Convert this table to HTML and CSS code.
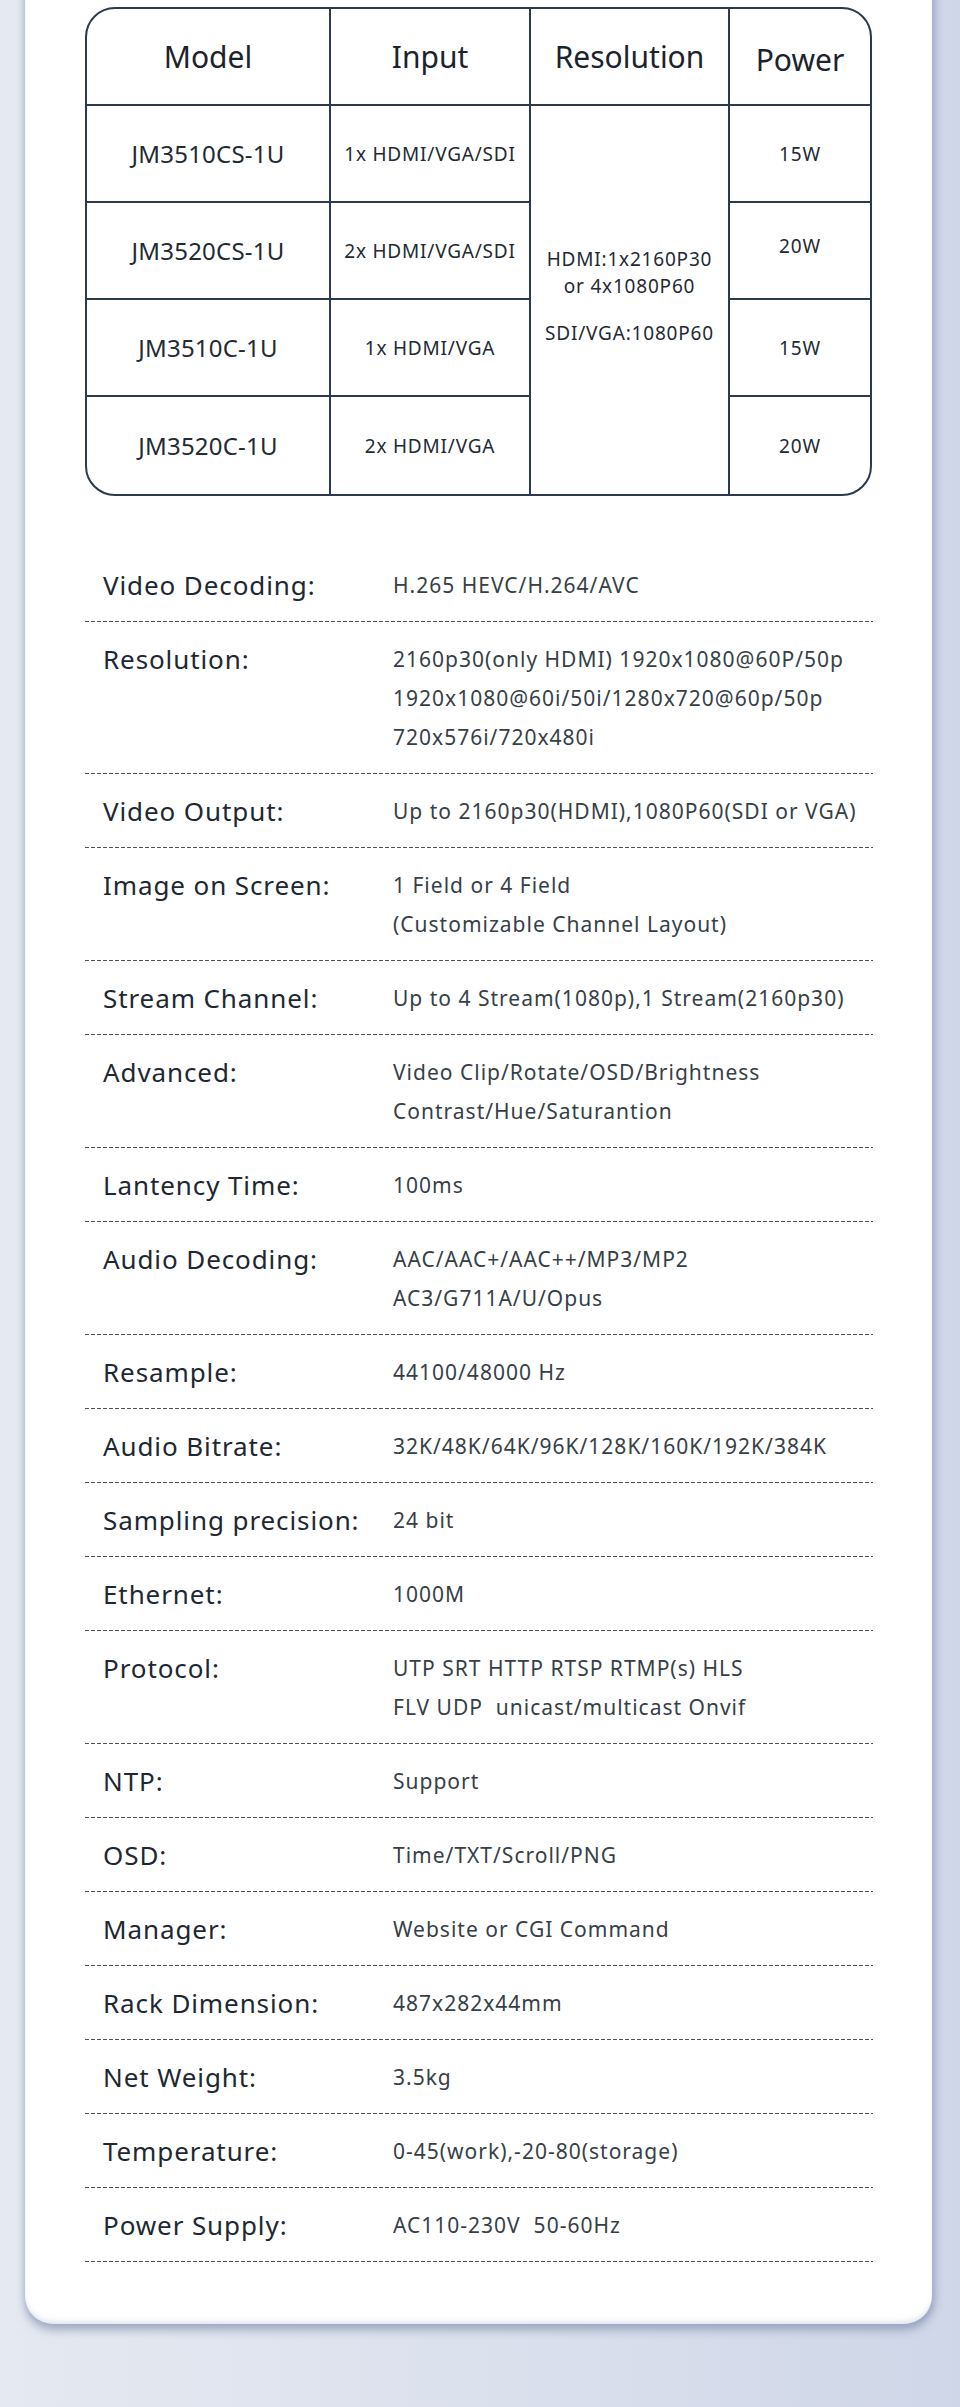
FILE: index.html
```html
<!DOCTYPE html>
<html lang="en">
<head>
<meta charset="utf-8">
<title>Specifications</title>
<link rel="stylesheet" href="styles.css">
</head>
<body>
<div class="page">
  <div class="card">
    <div class="models">
      <div class="cell head">Model</div>
      <div class="cell head">Input</div>
      <div class="cell head">Resolution</div>
      <div class="cell head last-col power-head">Power</div>

      <div class="cell res-span">
        <div class="res-block">HDMI:1x2160P30<br>or 4x1080P60</div>
        <div class="res-block">SDI/VGA:1080P60</div>
      </div>

      <div class="cell model">JM3510CS-1U</div>
      <div class="cell small">1x HDMI/VGA/SDI</div>
      <div class="cell small last-col">15W</div>

      <div class="cell model">JM3520CS-1U</div>
      <div class="cell small">2x HDMI/VGA/SDI</div>
      <div class="cell small last-col raised">20W</div>

      <div class="cell model">JM3510C-1U</div>
      <div class="cell small">1x HDMI/VGA</div>
      <div class="cell small last-col">15W</div>

      <div class="cell model last-row">JM3520C-1U</div>
      <div class="cell small last-row">2x HDMI/VGA</div>
      <div class="cell small last-col last-row">20W</div>
    </div>

    <dl class="specs">
      <div class="spec"><dt>Video Decoding:</dt><dd>H.265 HEVC/H.264/AVC</dd></div>
      <div class="spec"><dt>Resolution:</dt><dd>2160p30(only HDMI) 1920x1080@60P/50p<br>1920x1080@60i/50i/1280x720@60p/50p<br>720x576i/720x480i</dd></div>
      <div class="spec"><dt>Video Output:</dt><dd>Up to 2160p30(HDMI),1080P60(SDI or VGA)</dd></div>
      <div class="spec"><dt>Image on Screen:</dt><dd>1 Field or 4 Field<br>(Customizable Channel Layout)</dd></div>
      <div class="spec"><dt>Stream Channel:</dt><dd>Up to 4 Stream(1080p),1 Stream(2160p30)</dd></div>
      <div class="spec"><dt>Advanced:</dt><dd>Video Clip/Rotate/OSD/Brightness<br>Contrast/Hue/Saturantion</dd></div>
      <div class="spec"><dt>Lantency Time:</dt><dd>100ms</dd></div>
      <div class="spec"><dt>Audio Decoding:</dt><dd>AAC/AAC+/AAC++/MP3/MP2<br>AC3/G711A/U/Opus</dd></div>
      <div class="spec"><dt>Resample:</dt><dd>44100/48000 Hz</dd></div>
      <div class="spec"><dt>Audio Bitrate:</dt><dd>32K/48K/64K/96K/128K/160K/192K/384K</dd></div>
      <div class="spec"><dt>Sampling precision:</dt><dd>24 bit</dd></div>
      <div class="spec"><dt>Ethernet:</dt><dd>1000M</dd></div>
      <div class="spec"><dt>Protocol:</dt><dd>UTP SRT HTTP RTSP RTMP(s) HLS<br>FLV UDP&nbsp; unicast/multicast Onvif</dd></div>
      <div class="spec"><dt>NTP:</dt><dd>Support</dd></div>
      <div class="spec"><dt>OSD:</dt><dd>Time/TXT/Scroll/PNG</dd></div>
      <div class="spec"><dt>Manager:</dt><dd>Website or CGI Command</dd></div>
      <div class="spec"><dt>Rack Dimension:</dt><dd>487x282x44mm</dd></div>
      <div class="spec"><dt>Net Weight:</dt><dd>3.5kg</dd></div>
      <div class="spec"><dt>Temperature:</dt><dd>0-45(work),-20-80(storage)</dd></div>
      <div class="spec"><dt>Power Supply:</dt><dd>AC110-230V&nbsp; 50-60Hz</dd></div>
    </dl>
  </div>
</div>
</body>
</html>
```

FILE: styles.css
```css
* {
  box-sizing: border-box;
}

html, body {
  margin: 0;
  padding: 0;
}

body {
  width: 960px;
  font-family: "Noto Sans", "Open Sans", "Noto Sans CJK SC", sans-serif;
  color: #1f2a33;
  background: linear-gradient(to right, #e5e9f1 0%, #dbe1ed 50%, #cfd6e7 100%);
  overflow: hidden;
}

.page {
  min-height: 2407px;
  padding-bottom: 80px;
}

.card {
  width: 907px;
  margin: -40px 0 0 25px;
  padding: 47px 60px 62px 60px;
  background: #ffffff;
  border-radius: 0 0 28px 28px;
  box-shadow:
    inset 0 -5px 6px -3px rgba(185, 195, 215, 0.55),
    0 7px 8px rgba(125, 140, 172, 0.55),
    5px 0 6px rgba(150, 165, 198, 0.45),
    -2px 0 5px rgba(170, 182, 208, 0.35);
}

/* ---------- model table ---------- */

.models {
  display: grid;
  grid-template-columns: 244px 200px 199px 1fr;
  grid-template-rows: repeat(5, 97px);
  width: 787px;
  border: 2px solid #2c3a4d;
  border-radius: 30px;
  overflow: hidden;
}

.cell {
  display: flex;
  align-items: center;
  justify-content: center;
  text-align: center;
  border-right: 2px solid #2c3a4d;
  border-bottom: 2px solid #2c3a4d;
  color: #222a33;
}

.cell.last-col {
  border-right: none;
}

.cell.last-row {
  border-bottom: none;
}

.head {
  font-size: 30px;
  color: #1b232c;
}

.power-head {
  padding-top: 6px;
}

.model {
  font-size: 24px;
  letter-spacing: 0.2px;
}

.small {
  font-size: 19px;
  letter-spacing: 0.8px;
}

.raised {
  padding-bottom: 10px;
}

.res-span {
  grid-column: 3;
  grid-row: 2 / span 4;
  border-bottom: none;
  flex-direction: column;
  font-size: 19px;
  letter-spacing: 0.8px;
  line-height: 27px;
  padding-bottom: 8px;
}

.res-block + .res-block {
  margin-top: 20px;
}

/* ---------- spec list ---------- */

.specs {
  margin: 52px 0 0 0;
  padding: 0;
  width: 788px;
}

.spec {
  display: flex;
  align-items: flex-start;
  padding: 18px 0 16px 18px;
  border-bottom: 1px solid transparent;
  background-image: repeating-linear-gradient(to right, #4b525b 0 4px, transparent 4px 6px);
  background-size: 100% 1px;
  background-position: left bottom;
  background-repeat: no-repeat;
  background-origin: border-box;
}

.spec dt {
  width: 290px;
  flex: none;
  font-size: 26px;
  letter-spacing: 0.9px;
  line-height: 39px;
  color: #1d2832;
}

.spec dd {
  margin: 0;
  font-size: 21px;
  letter-spacing: 1px;
  line-height: 39px;
  color: #363f48;
}
```
